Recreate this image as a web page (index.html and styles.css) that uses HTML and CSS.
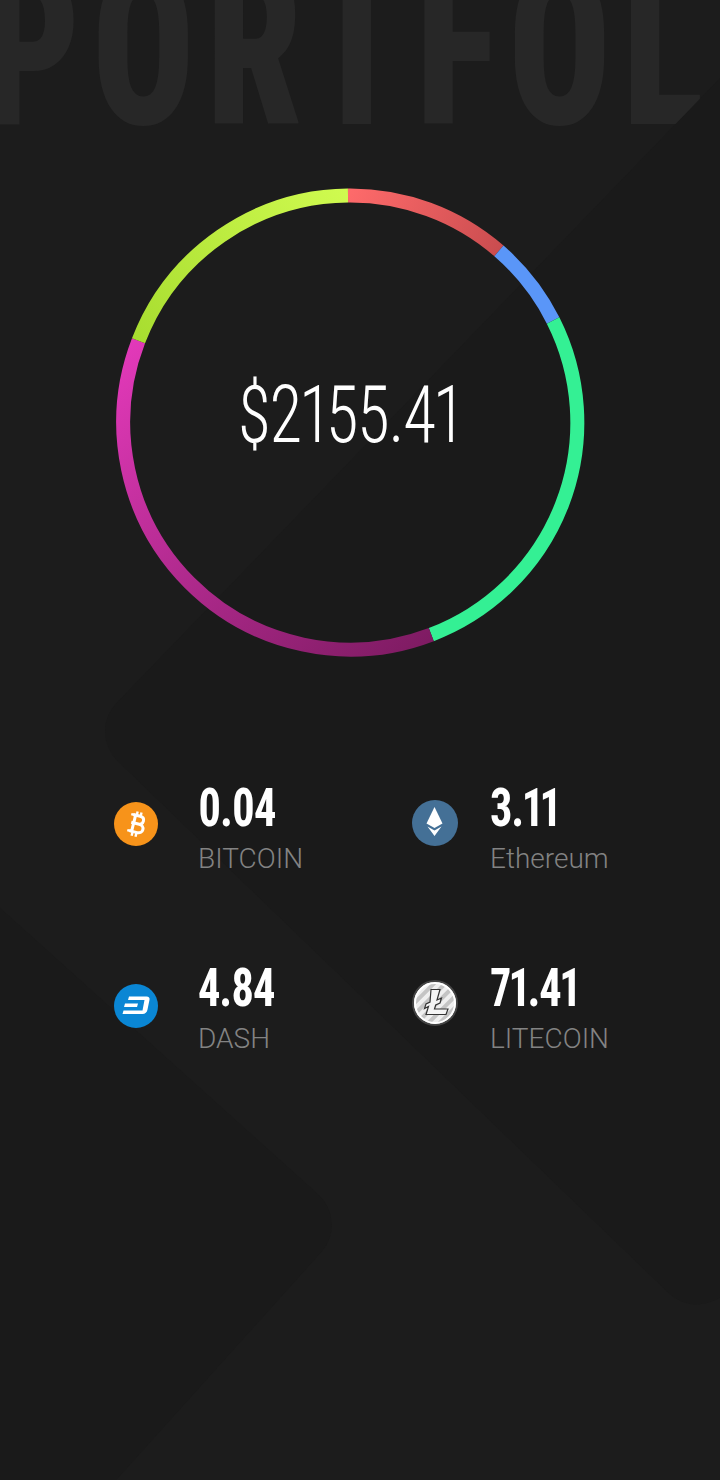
FILE: index.html
```html
<!doctype html>
<html lang="en">
  <head>
    <meta charset="UTF-8" />
    <meta name="viewport" content="width=device-width, initial-scale=1.0" />
    <title>Portfolio</title>
    <link rel="stylesheet" href="styles.css">
  </head>
  <body>
    <div class="screen">
      <h1 class="title">PORTFOLIO</h1>

      <!-- faint shapes, they sit over the title and cut the L -->
      <div class="bg-shape bg-shape-one"></div>
      <div class="bg-shape bg-shape-two"></div>

      <div class="chart">
        <svg class="ring" width="469" height="469" viewBox="0 0 469 469">
          <defs>
            <linearGradient id="redGrad" gradientUnits="userSpaceOnUse" x1="232" y1="0" x2="383" y2="70">
              <stop offset="0" stop-color="#ff6b6b" />
              <stop offset="1" stop-color="#c94c4f" />
            </linearGradient>
            <linearGradient id="pinkGrad" gradientUnits="userSpaceOnUse" x1="20" y1="150" x2="300" y2="468">
              <stop offset="0" stop-color="#e239b9" />
              <stop offset="1" stop-color="#7e1b62" />
            </linearGradient>
            <linearGradient id="limeGrad" gradientUnits="userSpaceOnUse" x1="232" y1="0" x2="22" y2="153">
              <stop offset="0" stop-color="#d0fb50" />
              <stop offset="1" stop-color="#a8dd30" />
            </linearGradient>
          </defs>
          <path class="seg" stroke="url(#redGrad)" d="M232 7.500A227 227 0 0 1 382.900 62.900" />
          <path class="seg" stroke="#5a96f8" d="M382.900 62.900A227 227 0 0 1 437.100 132.500" />
          <path class="seg" stroke="#34f094" d="M437.100 132.500A227 227 0 0 1 315.300 446.600" />
          <path class="seg" stroke="url(#pinkGrad)" d="M315.300 446.600A227 227 0 0 1 22.500 152.800" />
          <path class="seg" stroke="url(#limeGrad)" d="M22.500 152.800A227 227 0 0 1 232 7.500" />
        </svg>
        <div class="total"><span class="total-value">$2155.41</span></div>
      </div>

      <div class="coins">
        <div class="coin">
          <svg class="coin-icon" width="44" height="44" viewBox="0 0 44 44">
            <circle cx="22" cy="22" r="22" fill="#f7931a" />
            <g transform="rotate(14 22 22)">
              <path fill="none" stroke="#fff" stroke-width="3" d="M17 13.500h7.200c2.600 0 4.300 1.600 4.300 3.900s-1.700 4.100-4.300 4.100H17h8.200c2.900 0 4.800 1.700 4.800 4.200s-1.900 4.400-4.800 4.400H17M19.500 13.500v17" />
              <path fill="none" stroke="#fff" stroke-width="2.400" d="M15 13.500h4M15 30h4M20.600 9.500v4M24.600 9.500v4M20.600 30v4.500M24.600 30v4.500" />
            </g>
          </svg>
          <div class="coin-text">
            <div class="amount">0.04</div>
            <div class="name">BITCOIN</div>
          </div>
        </div>

        <div class="coin coin-right">
          <svg class="coin-icon" width="46" height="46" viewBox="0 0 46 46">
            <circle cx="23" cy="23" r="23" fill="#447096" />
            <path fill="#fff" d="M22.500 7L30.500 23.500 22.500 28 14.500 23.500Z" />
            <path fill="#fff" d="M15.500 26.500L22.500 30.500 29.500 26.500 22.500 36Z" />
          </svg>
          <div class="coin-text">
            <div class="amount">3.11</div>
            <div class="name">Ethereum</div>
          </div>
        </div>

        <div class="coin coin-low">
          <svg class="coin-icon" width="44" height="44" viewBox="0 0 44 44">
            <circle cx="22" cy="22" r="22" fill="#0a86d4" />
            <path fill="#fff" d="M15 12.500H32.500C34.800 12.500 36 13.900 35.500 15.800L33.500 25.500C33 28.300 31.200 30 28.500 30H8.500L9.500 26.500H28.500L30.500 16H14Z" />
            <path fill="#fff" d="M11 19.500H24L23 23H10Z" />
          </svg>
          <div class="coin-text">
            <div class="amount">4.84</div>
            <div class="name">DASH</div>
          </div>
        </div>

        <div class="coin coin-right">
          <svg class="coin-icon" width="46" height="46" viewBox="0 0 46 46">
            <defs>
              <pattern id="ltcStripes" width="8" height="8" patternUnits="userSpaceOnUse" patternTransform="rotate(45)">
                <rect width="8" height="8" fill="#efefef" />
                <rect width="4" height="8" fill="#c4c4c4" />
              </pattern>
            </defs>
            <circle cx="23" cy="23" r="22" fill="url(#ltcStripes)" stroke="#444" stroke-width="2" />
            <circle cx="23" cy="23" r="20" fill="none" stroke="#fff" stroke-width="2" />
            <path fill="#f4f4f4" stroke="#333" stroke-width="1.200" d="M19 9.500H28L25 20 29.500 18 28 23 23.700 25 22.500 29H36L34 34.500H14L16.500 26.500 12.500 28.500 14 24 18 22Z" />
          </svg>
          <div class="coin-text">
            <div class="amount">71.41</div>
            <div class="name">LITECOIN</div>
          </div>
        </div>
      </div>
    </div>
  </body>
</html>
```

FILE: styles.css
```css
* {
  box-sizing: border-box;
}
html,
body {
  margin: 0;
  padding: 0;
}
body {
  background: #1c1c1c;
  font-family: Roboto, Arial, sans-serif;
}
.screen {
  position: relative;
  width: 720px;
  height: 1480px;
  overflow: hidden;
  background: #1c1c1c;
}
.bg-shape {
  position: absolute;
  background: #1a1a1a;
  border-radius: 41px;
}
.bg-shape-one {
  left: 333px;
  top: 126px;
  width: 848px;
  height: 1048px;
  transform: rotate(44deg);
}
.bg-shape-two {
  left: -375px;
  top: 944px;
  width: 600px;
  height: 600px;
  transform: rotate(42deg);
}
.title {
  width: 1400px;
  height: 124px;
  margin: 0 0 0 -17px;
  color: #272727;
  font-family: Roboto, sans-serif;
  font-size: 220px;
  font-weight: 900;
  font-stretch: 75%;
  line-height: 98px;
  letter-spacing: 15.500px;
  white-space: nowrap;
  transform: scaleX(0.77);
  transform-origin: 0 0;
}
.chart {
  position: relative;
  width: 469px;
  height: 469px;
  margin: 64px 0 0 116px;
}
.ring {
  display: block;
}
.seg {
  fill: none;
  stroke-width: 14;
}
.total {
  position: absolute;
  top: 0;
  left: 0;
  width: 100%;
  height: 100%;
  padding: 0 3px 16px 0;
  display: flex;
  align-items: center;
  justify-content: center;
  color: #fff;
  font-family: Roboto, sans-serif;
  font-size: 80px;
  font-weight: 340;
  font-stretch: 75%;
  font-variant-numeric: proportional-nums;
}
.total-value {
  letter-spacing: -1.500px;
  transform: scaleX(0.84);
}
.coins {
  position: relative;
  display: grid;
  grid-template-columns: 298px 230px;
  grid-auto-rows: 120px;
  row-gap: 60px;
  margin: 123px 0 0 114px;
}
.coin {
  display: flex;
  align-items: flex-start;
}
.coin-icon {
  flex: none;
  margin-top: 22px;
}
.coin-low .coin-icon {
  margin-top: 24px;
}
.coin-right .coin-icon {
  margin-top: 20px;
}
.coin-text {
  margin-left: 40px;
}
.coin-right .coin-text {
  margin-left: 32px;
}
.amount {
  height: 63px;
  color: #fff;
  font-family: Roboto, sans-serif;
  font-size: 53px;
  font-weight: 700;
  font-stretch: 75%;
  font-variant-numeric: proportional-nums;
  line-height: 56px;
  letter-spacing: -1.500px;
  transform: scaleX(0.84);
  transform-origin: 0 0;
}
.name {
  color: #838383;
  font-size: 28px;
  font-weight: 300;
  line-height: 32px;
}
```
